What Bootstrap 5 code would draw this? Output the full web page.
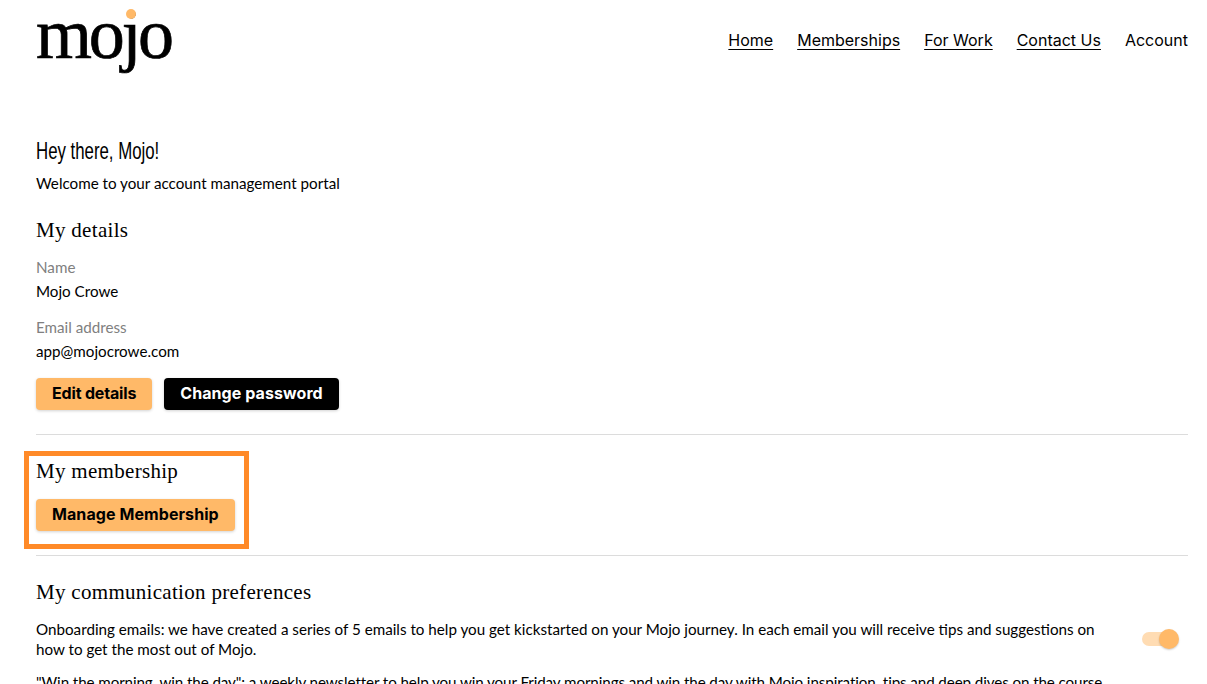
<!doctype html>
<html lang="en">
<head>
<meta charset="utf-8">
<title>Mojo account</title>
<link href="https://cdn.jsdelivr.net/npm/bootstrap@5.3.0/dist/css/bootstrap.min.css" rel="stylesheet">
<style>
html, body { height: 684px; overflow: hidden; }
body { font-family: "Lato", "Liberation Sans", sans-serif; font-size: 15.2px; color: #000; background: #fff; }
.site-head { padding: 0 19px 0 36px; height: 80px; }
.logo-wrap { position: relative; display: block; width: 136px; height: 80px; }
.logo-text { font-family: "Liberation Serif", serif; font-size: 72px; line-height: 68px; letter-spacing: -3.3px; color: #000; display: block; -webkit-text-stroke: .7px #000; }
.logo-dot { position: absolute; left: 90px; top: 9px; width: 10px; height: 10px; border-radius: 50%; background: #ffb968; }
.top-link { font-family: "Inter", sans-serif; font-size: 16px; color: #000; text-decoration: underline; text-underline-offset: 3px; }
.top-link.plain { text-decoration: none; }
.page-body { padding: 0 19px 0 36px; }
.hello { font-family: "Liberation Sans", sans-serif; font-size: 24px; line-height: 26px; margin: 58px 0 0; font-weight: 400; display: block; width: fit-content; transform: scaleX(.7); transform-origin: left center; }
.intro { margin: 7px 0 0; line-height: 24px; }
.sect-title { font-family: "Liberation Serif", serif; font-size: 21px; line-height: 26px; font-weight: 400; margin: 0; letter-spacing: .3px; }
.title-gap-a { margin-top: 22px; }
.title-gap-b { margin-top: 23px; }
.field-label { color: #808080; line-height: 24px; margin-top: 12px; }
.field-value { line-height: 24px; }
.btn-row { margin-top: 15px; }
.mojo-btn { font-family: "Inter", sans-serif; font-weight: 700; font-size: 16px; line-height: 24px; padding: 3px 16px 5px; border: 0; border-radius: 4px; box-shadow: 0 1px 3px rgba(0,0,0,.18); }
.mojo-btn.peach, .mojo-btn.peach:hover { background: #ffb968; color: #000; }
.mojo-btn.ink, .mojo-btn.ink:hover { background: #000; color: #fff; }
.ls-wide { letter-spacing: .08px; }
.ls-tight { letter-spacing: -.17px; }
.rule-line { border-top: 1px solid #dcdcdc; opacity: 1; margin: 0; }
.rule-close { margin-top: 6px; }
.callout { border: 5px solid #ff8a28; padding: 2px 9px 13px 7px; width: fit-content; margin: 16px 0 0 -12px; }
.callout .mojo-btn { margin-top: 15px; display: block; }
.pref-row { margin-top: 14px; }
.pref-text { line-height: 20px; margin: 0; max-width: 1075px; }
.pref-next { margin-top: 13px; letter-spacing: -.1px; }
.toggle-track { position: relative; display: block; width: 34px; height: 14px; border-radius: 7px; background: #ffdcb3; margin-right: 12px; flex: none; }
.toggle-knob { position: absolute; right: -3px; top: -3px; width: 20px; height: 20px; border-radius: 50%; background: #ffb968; box-shadow: 0 1px 2px rgba(0,0,0,.2); }
</style>
</head>
<body>
<header class="site-head d-flex justify-content-between align-items-center">
  <a class="logo-wrap text-decoration-none" href="#"><span class="logo-text">mojo</span><span class="logo-dot"></span></a>
  <nav class="d-flex gap-4">
    <a class="top-link" href="#">Home</a>
    <a class="top-link" href="#">Memberships</a>
    <a class="top-link" href="#">For Work</a>
    <a class="top-link" href="#">Contact Us</a>
    <a class="top-link plain" href="#">Account</a>
  </nav>
</header>
<main class="page-body">
  <h1 class="hello">Hey there, Mojo!</h1>
  <p class="intro">Welcome to your account management portal</p>
  <h2 class="sect-title title-gap-a">My details</h2>
  <div class="field-label">Name</div>
  <div class="field-value">Mojo Crowe</div>
  <div class="field-label">Email address</div>
  <div class="field-value">app@mojocrowe.com</div>
  <div class="d-flex gap-2 btn-row">
    <button class="btn mojo-btn peach ls-tight">Edit details</button>
    <button class="btn mojo-btn ink ms-1 ls-wide">Change password</button>
  </div>
  <hr class="rule-line mt-4">
  <section class="callout">
    <h2 class="sect-title">My membership</h2>
    <button class="btn mojo-btn peach ls-wide">Manage Membership</button>
  </section>
  <hr class="rule-line rule-close">
  <h2 class="sect-title title-gap-b">My communication preferences</h2>
  <div class="d-flex justify-content-between align-items-center pref-row">
    <p class="pref-text">Onboarding emails: we have created a series of 5 emails to help you get kickstarted on your Mojo journey. In each email you will receive tips and suggestions on how to get the most out of Mojo.</p>
    <span class="toggle-track"><span class="toggle-knob"></span></span>
  </div>
  <p class="pref-text pref-next">"Win the morning, win the day": a weekly newsletter to help you win your Friday mornings and win the day with Mojo inspiration, tips and deep dives on the course.</p>
</main>
<script src="https://cdn.jsdelivr.net/npm/bootstrap@5.3.0/dist/js/bootstrap.bundle.min.js"></script>
</body>
</html>
